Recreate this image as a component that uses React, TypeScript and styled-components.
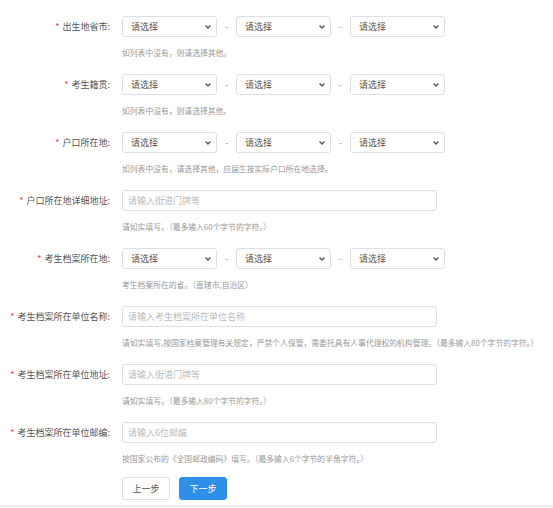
import React from 'react';
import styled, { createGlobalStyle } from 'styled-components';

const GlobalStyle = createGlobalStyle`
  html, body {
    margin: 0;
    padding: 0;
    background: #fff;
    font-family: "Noto Sans CJK SC", "Noto Sans", "Liberation Sans", sans-serif;
  }
`;

const Page = styled.div`
  width: 553px;
  height: 508px;
  overflow: hidden;
  display: flex;
  flex-direction: column;
`;

const Form = styled.div`
  padding-top: 16px;
  display: flex;
  flex-direction: column;
  gap: 15px;
`;

const Field = styled.div`
  display: grid;
  grid-template-columns: 110px auto;
  column-gap: 12px;
  align-items: center;
`;

const Label = styled.label`
  text-align: right;
  font-size: 9px;
  line-height: 21px;
  height: 21px;
  color: #555;
  white-space: nowrap;
`;

const Star = styled.span`
  color: #e8402f;
  margin-right: 3px;
`;

const Controls = styled.div`
  display: flex;
  align-items: center;
  height: 21px;
  gap: 8px;
`;

const Dash = styled.span`
  font-size: 9px;
  line-height: 21px;
  color: #999;
  width: 3px;
`;

const SelectBox = styled.div`
  width: 95px;
  height: 21px;
  box-sizing: border-box;
  border: 1px solid #dcdfe6;
  border-radius: 3px;
  background: #fff;
  padding: 0 5px 0 8px;
  display: flex;
  align-items: center;
  justify-content: space-between;
  font-size: 9px;
  color: #555;
`;

const Input = styled.input`
  width: 315px;
  height: 21px;
  box-sizing: border-box;
  border: 1px solid #dcdfe6;
  border-radius: 3px;
  padding: 0 5px;
  margin: 0;
  font-family: inherit;
  font-size: 9px;
  color: #555;
  outline: none;

  &::placeholder {
    color: #bbb;
  }
`;

const Hint = styled.div`
  grid-column: 2;
  margin-top: 10px;
  font-size: 7.8px;
  line-height: 12px;
  color: #999;
  white-space: nowrap;
`;

const Actions = styled.div`
  margin-top: 12px;
  padding-left: 122px;
  display: flex;
  gap: 9px;
`;

const Button = styled.button<{ $primary?: boolean }>`
  width: 48px;
  height: 23px;
  box-sizing: border-box;
  border-radius: 3px;
  border: 1px solid ${({ $primary }) => ($primary ? '#2d8fe8' : '#dcdfe6')};
  background: ${({ $primary }) => ($primary ? '#2d8fe8' : '#fff')};
  color: ${({ $primary }) => ($primary ? '#fff' : '#555')};
  font-family: inherit;
  font-size: 9px;
  padding: 0;
`;

const Footer = styled.div`
  margin-top: 5px;
  flex: 1;
  background: #f1f1f4;
  border-top: 1px solid #e6e6ea;
`;

const Dropdown = () => (
  <SelectBox>
    <span>请选择</span>
    <svg width="6" height="4" viewBox="0 0 6 4">
      <path d="M0.6 0.6 L3 3 L5.4 0.6" fill="none" stroke="#555" strokeWidth="1.4" />
    </svg>
  </SelectBox>
);

const Triple = () => (
  <Controls>
    <Dropdown />
    <Dash>-</Dash>
    <Dropdown />
    <Dash>-</Dash>
    <Dropdown />
  </Controls>
);

type Row = { label: string; hint: string; placeholder?: string };

const rows: Row[] = [
  { label: '出生地省市', hint: '如列表中没有，则请选择其他。' },
  { label: '考生籍贯', hint: '如列表中没有，则请选择其他。' },
  { label: '户口所在地', hint: '如列表中没有，请选择其他，应届生按实际户口所在地选择。' },
  {
    label: '户口所在地详细地址',
    hint: '请如实填写。（最多输入60个字节的字符。）',
    placeholder: '请输入街道门牌等',
  },
  { label: '考生档案所在地', hint: '考生档案所在的省。（直辖市,自治区）' },
  {
    label: '考生档案所在单位名称',
    hint: '请如实填写,按国家档案管理有关规定，严禁个人保管，需委托具有人事代理权的机构管理。（最多输入80个字节的字符。）',
    placeholder: '请输入考生档案所在单位名称',
  },
  {
    label: '考生档案所在单位地址',
    hint: '请如实填写。（最多输入80个字节的字符。）',
    placeholder: '请输入街道门牌等',
  },
  {
    label: '考生档案所在单位邮编',
    hint: '按国家公布的《全国邮政编码》填写。（最多输入6个字节的半角字符。）',
    placeholder: '请输入6位邮编',
  },
];

export default function App() {
  return (
    <>
      <GlobalStyle />
      <Page>
        <Form>
          {rows.map((row) => (
            <Field key={row.label}>
              <Label>
                <Star>*</Star>
                {row.label}:
              </Label>
              {row.placeholder ? <Input placeholder={row.placeholder} /> : <Triple />}
              <Hint>{row.hint}</Hint>
            </Field>
          ))}
        </Form>
        <Actions>
          <Button>上一步</Button>
          <Button $primary>下一步</Button>
        </Actions>
        <Footer />
      </Page>
    </>
  );
}
